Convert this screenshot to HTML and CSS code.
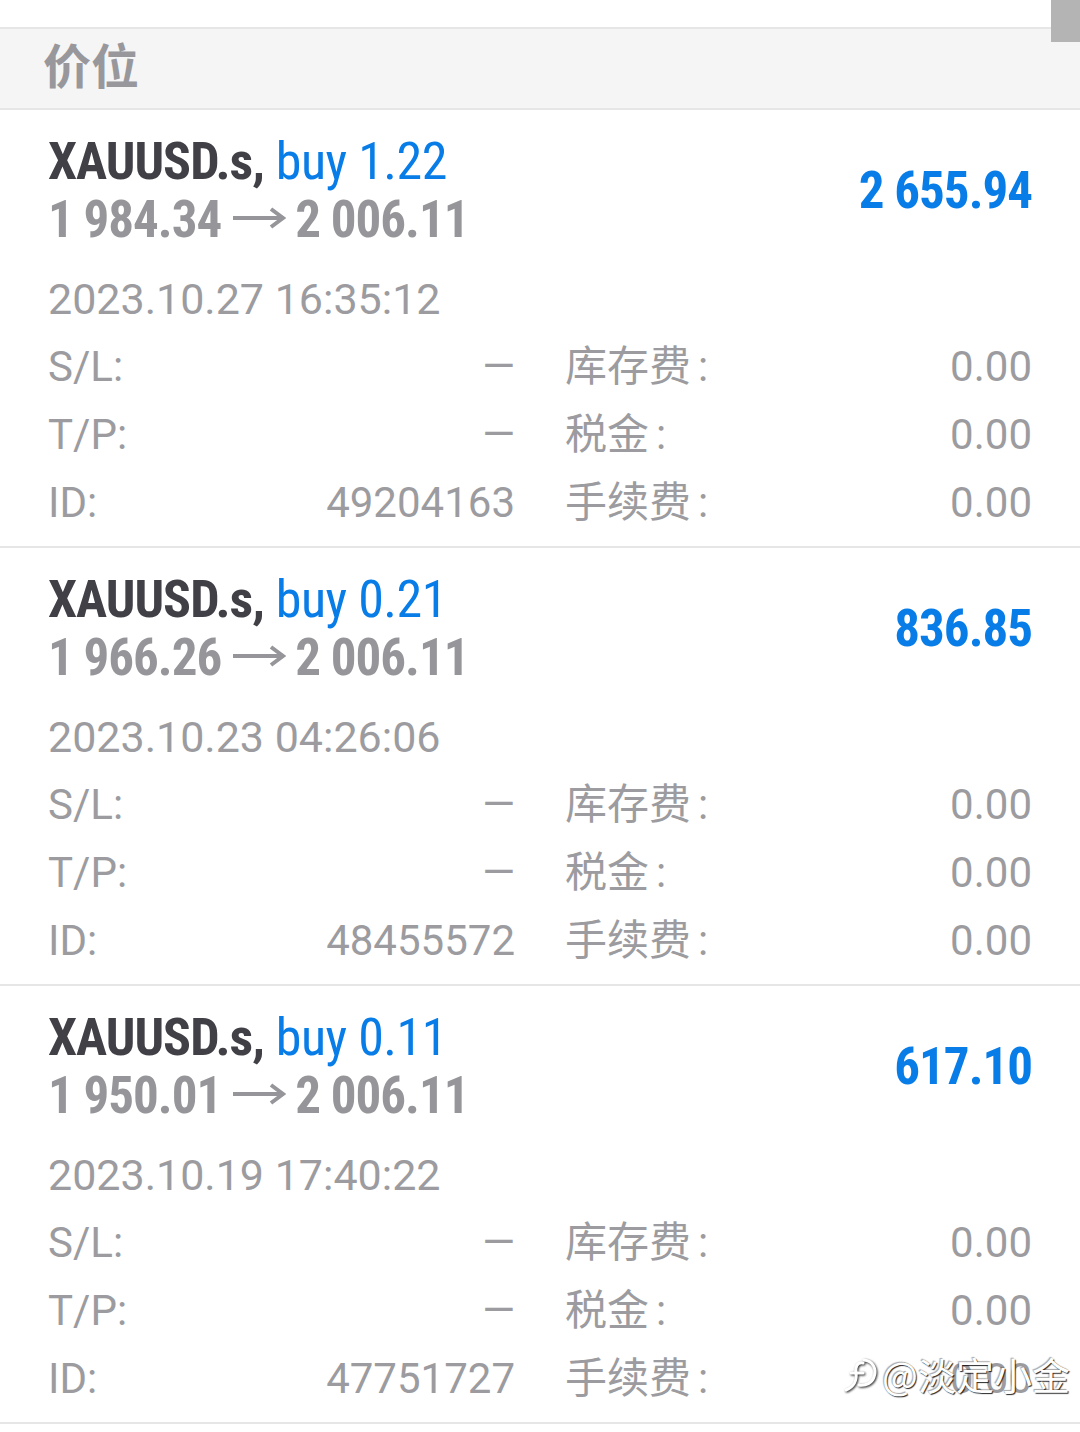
FILE: index.html
```html
<!DOCTYPE html>
<html lang="zh">
<head>
    <meta charset="UTF-8">
    <title>持仓</title>
    <link rel="stylesheet" href="styles.css">
</head>
<body>
    <div class="screen">
        <div class="scroll-thumb"></div>

        <div class="section-head">价位</div>

        <div class="position">
            <div class="pos-top">
                <div class="pos-title">
                    <div><span class="symbol">XAUUSD.s,</span> <span class="side">buy 1.22</span></div>
                    <div class="prices">1 984.34<svg class="arrow" width="54" height="24" viewBox="0 0 54 24"><path d="M1 12 H50 M39 3 L51 12 L39 21" fill="none" stroke="#96969a" stroke-width="4"/></svg>2 006.11</div>
                </div>
                <div class="profit">2 655.94</div>
            </div>
            <div class="pos-date">2023.10.27 16:35:12</div>
            <div class="pos-grid">
                <div class="kv"><span>S/L:</span><span>—</span></div>
                <div class="kv"><span>库存费<i class="colon">:</i></span><span>0.00</span></div>
                <div class="kv"><span>T/P:</span><span>—</span></div>
                <div class="kv"><span>税金<i class="colon">:</i></span><span>0.00</span></div>
                <div class="kv"><span>ID:</span><span>49204163</span></div>
                <div class="kv"><span>手续费<i class="colon">:</i></span><span>0.00</span></div>
            </div>
        </div>

        <div class="position">
            <div class="pos-top">
                <div class="pos-title">
                    <div><span class="symbol">XAUUSD.s,</span> <span class="side">buy 0.21</span></div>
                    <div class="prices">1 966.26<svg class="arrow" width="54" height="24" viewBox="0 0 54 24"><path d="M1 12 H50 M39 3 L51 12 L39 21" fill="none" stroke="#96969a" stroke-width="4"/></svg>2 006.11</div>
                </div>
                <div class="profit">836.85</div>
            </div>
            <div class="pos-date">2023.10.23 04:26:06</div>
            <div class="pos-grid">
                <div class="kv"><span>S/L:</span><span>—</span></div>
                <div class="kv"><span>库存费<i class="colon">:</i></span><span>0.00</span></div>
                <div class="kv"><span>T/P:</span><span>—</span></div>
                <div class="kv"><span>税金<i class="colon">:</i></span><span>0.00</span></div>
                <div class="kv"><span>ID:</span><span>48455572</span></div>
                <div class="kv"><span>手续费<i class="colon">:</i></span><span>0.00</span></div>
            </div>
        </div>

        <div class="position">
            <div class="pos-top">
                <div class="pos-title">
                    <div><span class="symbol">XAUUSD.s,</span> <span class="side">buy 0.11</span></div>
                    <div class="prices">1 950.01<svg class="arrow" width="54" height="24" viewBox="0 0 54 24"><path d="M1 12 H50 M39 3 L51 12 L39 21" fill="none" stroke="#96969a" stroke-width="4"/></svg>2 006.11</div>
                </div>
                <div class="profit">617.10</div>
            </div>
            <div class="pos-date">2023.10.19 17:40:22</div>
            <div class="pos-grid">
                <div class="kv"><span>S/L:</span><span>—</span></div>
                <div class="kv"><span>库存费<i class="colon">:</i></span><span>0.00</span></div>
                <div class="kv"><span>T/P:</span><span>—</span></div>
                <div class="kv"><span>税金<i class="colon">:</i></span><span>0.00</span></div>
                <div class="kv"><span>ID:</span><span>47751727</span></div>
                <div class="kv"><span>手续费<i class="colon">:</i></span><span>0.00</span></div>
            </div>
        </div>

        <div class="watermark">
            <svg class="wm-logo" width="36" height="40" viewBox="0 0 36 40">
                <path d="M22 6 C31 7 35 15 32 23 C30 29 24 32 17 31" fill="none" stroke="#fff" stroke-width="3" stroke-linecap="round"/>
                <path d="M21 9 C15 8 13 13 14 19 C15 26 12 33 4 36" fill="none" stroke="#fff" stroke-width="3" stroke-linecap="round"/>
                <path d="M9 19 L21 19" fill="none" stroke="#fff" stroke-width="3" stroke-linecap="round"/>
            </svg>
            <span>@淡定小金</span>
        </div>
    </div>
</body>
</html>
```

FILE: styles.css
```css
body {
    margin: 0;
    background-color: #ffffff;
    font-family: 'Roboto', 'Noto Sans CJK SC', sans-serif;
}
.screen {
    position: relative;
    width: 1080px;
    padding-top: 27px;
}
.scroll-thumb {
    position: absolute;
    top: 0;
    right: 0;
    width: 29px;
    height: 42px;
    background: #b4b4b4;
}
.section-head {
    height: 79px;
    line-height: 69px;
    padding-left: 43px;
    background: #f5f5f5;
    border-top: 2px solid #e6e6e6;
    border-bottom: 2px solid #e6e6e6;
    color: #98989c;
    font-family: 'Noto Sans CJK SC', sans-serif;
    font-size: 48px;
    font-weight: bold;
}
.position {
    padding: 23px 48px 9px;
    border-bottom: 2px solid #e6e6e6;
}
.pos-top {
    display: flex;
    justify-content: space-between;
    align-items: center;
}
.pos-title {
    font-family: 'Liberation Sans Narrow', 'Roboto', sans-serif;
    font-stretch: condensed;
    font-size: 52px;
    line-height: 58px;
    white-space: nowrap;
}
.symbol {
    color: #404046;
    font-weight: bold;
    letter-spacing: -1px;
}
.side {
    color: #087de8;
    letter-spacing: -0.5px;
}
.prices {
    color: #96969a;
    font-weight: bold;
    font-size: 51px;
    letter-spacing: -1px;
}
.arrow {
    vertical-align: 7px;
    margin: 0 9px 0 11px;
}
.profit {
    font-family: 'Liberation Sans Narrow', 'Roboto', sans-serif;
    font-stretch: condensed;
    color: #087de8;
    font-weight: bold;
    font-size: 51px;
    letter-spacing: -1px;
    line-height: 58px;
}
.pos-date {
    margin-top: 16px;
    color: #9c9ca0;
    font-size: 43px;
    line-height: 68px;
}
.pos-grid {
    display: grid;
    grid-template-columns: 1fr 1fr;
    column-gap: 50px;
}
.kv {
    display: flex;
    justify-content: space-between;
    color: #9c9ca0;
    font-size: 42px;
    line-height: 68px;
}
.colon {
    font-style: normal;
    margin-left: 7px;
}
.watermark {
    position: absolute;
    left: 842px;
    top: 1350px;
    display: flex;
    align-items: center;
    gap: 4px;
    color: #ffffff;
    font-family: 'Noto Sans CJK SC', sans-serif;
    font-size: 38px;
    line-height: 48px;
    text-shadow: 1px 1px 1px rgba(0,0,0,0.85), -1px -1px 1px rgba(0,0,0,0.35);
}
.wm-logo {
    filter: drop-shadow(1px 1px 1px rgba(0,0,0,0.85));
}
```
